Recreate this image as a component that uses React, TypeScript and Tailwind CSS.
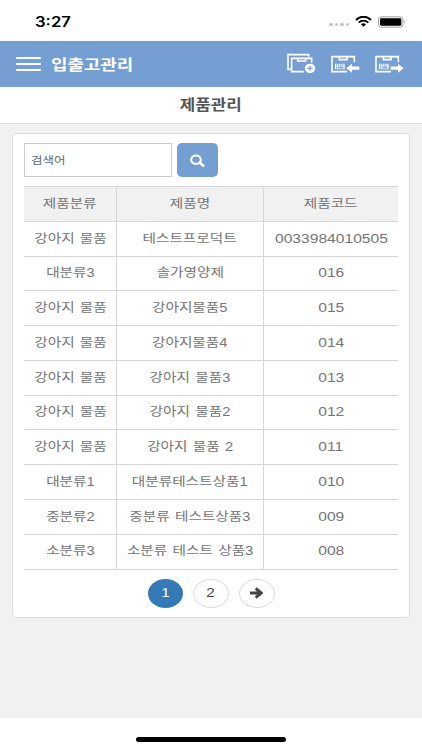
import React from "react";
import { clsx } from "clsx";

interface Product {
  category: string;
  name: string;
  code: string;
}

const products: Product[] = [
  { category: "강아지 물품", name: "테스트프로덕트", code: "0033984010505" },
  { category: "대분류3", name: "솔가영양제", code: "016" },
  { category: "강아지 물품", name: "강아지물품5", code: "015" },
  { category: "강아지 물품", name: "강아지물품4", code: "014" },
  { category: "강아지 물품", name: "강아지 물품3", code: "013" },
  { category: "강아지 물품", name: "강아지 물품2", code: "012" },
  { category: "강아지 물품", name: "강아지 물품 2", code: "011" },
  { category: "대분류1", name: "대분류테스트상품1", code: "010" },
  { category: "중분류2", name: "중분류 테스트상품3", code: "009" },
  { category: "소분류3", name: "소분류 테스트 상품3", code: "008" },
];

const StatusBar = () => (
  <div className="flex h-[41px] shrink-0 items-center justify-between bg-white pl-[35px] pr-[16px] pt-[2px]">
    <span className="origin-left scale-x-[1.19] text-[14px] font-semibold leading-none text-black font-['Inter',sans-serif]">
      3:27
    </span>
    <div className="flex items-center">
      <div className="mr-[6px] mt-[6px] flex gap-[2px]">
        {[0, 1, 2, 3].map((dot) => (
          <span key={dot} className="h-[3px] w-[3.5px] rounded-full bg-[#c4c4c4]" />
        ))}
      </div>
      <svg className="mr-[6px] h-[11px] w-[17px]" viewBox="0 0 51 33" fill="none" stroke="#000">
        <path d="M3 12C15-1 36-1 48 12" strokeWidth="6" />
        <path d="M11 20C19 12 32 12 40 20" strokeWidth="5.5" />
        <path d="M18 25C22 21 29 21 33 25L25.500 32Z" fill="#000" stroke="none" />
      </svg>
      <svg className="h-[12px] w-[28px]" viewBox="0 0 84 36">
        <rect x="1.500" y="2.500" width="73" height="31" rx="8" fill="none" stroke="#8d8d8d" strokeWidth="2.500" />
        <rect x="6" y="7" width="64" height="22" rx="4" />
        <path d="M78 13q5 5 0 10z" fill="#8d8d8d" />
      </svg>
    </div>
  </div>
);

const AddBoxIcon = () => (
  <svg className="h-[20px] w-[29px]" viewBox="0 0 87 60" fill="none" stroke="#fff" strokeWidth="4.800">
    <path d="M12 49H3V5H65V11" />
    <path d="M74 29V16H14V56H50" />
    <path d="M32 16V24H56V16" />
    <ellipse cx="69" cy="46" rx="15.500" ry="14" fill="#fff" stroke="none" />
    <path d="M69 38.500V53.500M61 46H77" stroke="#759ed3" strokeWidth="3.500" />
  </svg>
);

const BarcodeBox = () => (
  <>
    <path d="M70 27V11H3V56H48" />
    <path d="M25 11V20H48V11" />
    <path d="M14 32V49M39 32V49" strokeWidth="4" />
    <path d="M20.500 32V49M26.500 32V42M26.500 45V49M33 32V42M33 45V49" strokeWidth="3.500" />
  </>
);

const InboundIcon = () => (
  <svg className="h-[20px] w-[29px]" viewBox="0 0 87 60" fill="none" stroke="#fff" strokeWidth="4.800">
    <BarcodeBox />
    <path d="M46 45.500L63 32V40.500H85V50.500H63V59Z" fill="#fff" stroke="none" />
  </svg>
);

const OutboundIcon = () => (
  <svg className="h-[20px] w-[29px]" viewBox="0 0 87 60" fill="none" stroke="#fff" strokeWidth="4.800">
    <BarcodeBox />
    <path d="M86 45.500L69 32V40.500H47V50.500H69V59Z" fill="#fff" stroke="none" />
  </svg>
);

const Header = () => (
  <header className="flex h-[46px] shrink-0 items-center bg-[#759ed3] pl-[16px] pr-[18px]">
    <button className="flex w-[25px] flex-col gap-[4px]" aria-label="menu">
      <span className="h-[2px] rounded-full bg-white" />
      <span className="h-[2px] rounded-full bg-white" />
      <span className="h-[2px] rounded-full bg-white" />
    </button>
    <h1 className="ml-[10px] origin-left scale-x-[1.19] text-[15px] font-bold leading-none text-white">입출고관리</h1>
    <div className="mb-[3px] ml-auto flex gap-[15px]">
      <AddBoxIcon />
      <InboundIcon />
      <OutboundIcon />
    </div>
  </header>
);

interface CellProps {
  text: string;
  last?: boolean;
  head?: boolean;
}

const Cell = ({ text, last, head }: CellProps) => (
  <div
    className={clsx(
      "flex items-center justify-center whitespace-nowrap border-b border-[#d6d6d6]",
      !last && "border-r",
      head && "bg-[#f1f1f1]"
    )}
  >
    <span
      className={clsx(
        "text-[12.3px] leading-none text-[#757575] [word-spacing:1px]",
        last && !head ? "scale-x-[1.27]" : "scale-x-[1.19]"
      )}
    >
      {text}
    </span>
  </div>
);

const ProductTable = () => (
  <div className="mt-[9px] grid h-[383.500px] grid-cols-[93px_147px_1fr] grid-rows-11 border-t border-[#d6d6d6]">
    <Cell text="제품분류" head />
    <Cell text="제품명" head />
    <Cell text="제품코드" head last />
    {products.map((product) => (
      <React.Fragment key={product.code}>
        <Cell text={product.category} />
        <Cell text={product.name} />
        <Cell text={product.code} last />
      </React.Fragment>
    ))}
  </div>
);

const Pagination = () => (
  <div className="mt-[9px] flex justify-center gap-[10px] text-[12.5px] leading-none text-[#444]">
    <button className="flex h-[29px] w-[35px] items-center justify-center rounded-[50%] bg-[#337ab7] text-white">
      <span className="scale-x-[1.22]">1</span>
    </button>
    <button className="flex h-[29px] w-[36px] items-center justify-center rounded-[50%] border border-[#ddd]">
      <span className="scale-x-[1.22]">2</span>
    </button>
    <button className="flex h-[29px] w-[36px] items-center justify-center rounded-[50%] border border-[#ddd]">
      <svg className="mb-[1px] h-[12px] w-[13px]" viewBox="0 0 39 36" fill="none" stroke="#444" strokeWidth="9">
        <path d="M0 18H33M17 4L34 18L17 32" />
      </svg>
    </button>
  </div>
);

export default function App() {
  return (
    <div className="flex h-[750px] w-[422px] flex-col overflow-hidden bg-white font-['Liberation_Sans','Noto_Sans_CJK_KR',sans-serif]">
      <StatusBar />
      <Header />
      <div className="flex h-[37px] shrink-0 items-center justify-center border-b border-[#d9d9d9] bg-white">
        <h2 className="scale-x-[1.16] text-[14.500px] font-bold leading-none text-[#555]">제품관리</h2>
      </div>
      <main className="h-[594px] shrink-0 bg-[#f1f1f1] px-[12px] pt-[9px]">
        <section className="h-[485px] rounded-[4px] border border-[#dedede] bg-white px-[11px] pt-[9px]">
          <div className="flex gap-[5px]">
            <div className="flex h-[34px] w-[148px] items-center border border-[#ccc] pl-[6px]">
              <span className="origin-left scale-x-[1.19] text-[10.500px] leading-none text-[#666]">검색어</span>
            </div>
            <button className="flex h-[34px] w-[41px] items-center justify-center rounded-[5px] bg-[#759ed3]" aria-label="search">
              <svg className="h-[13px] w-[15px]" viewBox="0 0 45 39" fill="none" stroke="#fff">
                <ellipse cx="18" cy="17" rx="14.500" ry="12.500" strokeWidth="6.500" />
                <path d="M29 26L40 35" strokeWidth="7.500" strokeLinecap="round" />
              </svg>
            </button>
          </div>
          <ProductTable />
          <Pagination />
        </section>
      </main>
      <div className="flex grow items-end justify-center bg-white pb-[8px]">
        <span className="h-[5px] w-[150px] rounded-full bg-black" />
      </div>
    </div>
  );
}
